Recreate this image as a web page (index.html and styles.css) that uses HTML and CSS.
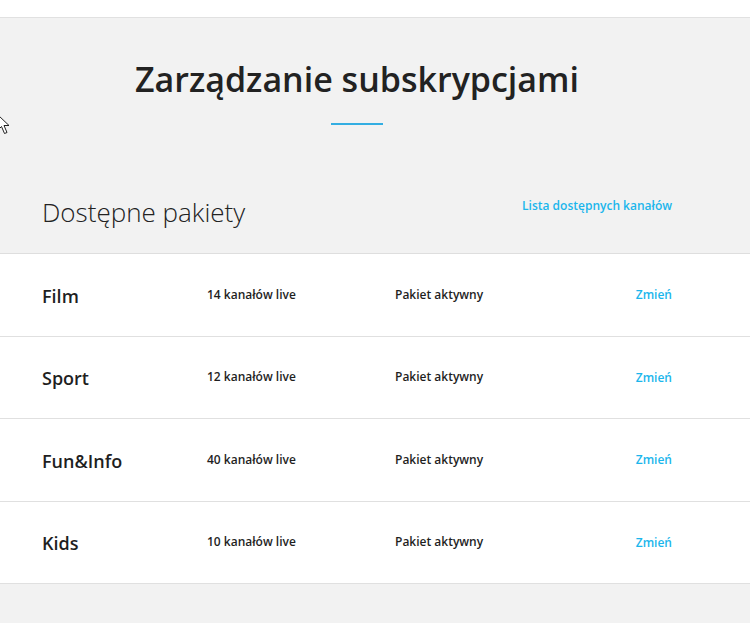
FILE: index.html
```html
<!DOCTYPE html>
<html lang="pl">
<head>
    <meta charset="UTF-8">
    <meta name="viewport" content="width=device-width, initial-scale=1.0">
    <title>Zarządzanie subskrypcjami</title>
    <link rel="stylesheet" href="styles.css">
</head>
<body>
    <div class="topbar"></div>
    <section class="intro">
        <div class="wrap">
            <h1>Zarządzanie subskrypcjami</h1>
            <div class="underline"></div>
            <div class="packages-head">
                <h2>Dostępne pakiety</h2>
                <a href="#" class="link">Lista dostępnych kanałów</a>
            </div>
        </div>
        <svg class="cursor" width="14" height="22" viewBox="0 0 14 22">
            <path d="M1 1 L1 16 L4.5 12.5 L7.5 19.5 L10 18.5 L7 11.5 L12 11.5 Z" fill="#fff" stroke="#222" stroke-width="1"/>
        </svg>
    </section>
    <section class="packages">
        <div class="row">
            <div class="wrap row-inner">
                <div class="name">Film</div>
                <div class="info">14 kanałów live</div>
                <div class="info">Pakiet aktywny</div>
                <a href="#" class="link">Zmień</a>
            </div>
        </div>
        <div class="row">
            <div class="wrap row-inner">
                <div class="name">Sport</div>
                <div class="info">12 kanałów live</div>
                <div class="info">Pakiet aktywny</div>
                <a href="#" class="link">Zmień</a>
            </div>
        </div>
        <div class="row">
            <div class="wrap row-inner">
                <div class="name">Fun&amp;Info</div>
                <div class="info">40 kanałów live</div>
                <div class="info">Pakiet aktywny</div>
                <a href="#" class="link">Zmień</a>
            </div>
        </div>
        <div class="row">
            <div class="wrap row-inner">
                <div class="name">Kids</div>
                <div class="info">10 kanałów live</div>
                <div class="info">Pakiet aktywny</div>
                <a href="#" class="link">Zmień</a>
            </div>
        </div>
    </section>
</body>
</html>
```

FILE: styles.css
```css
body {
    font-family: "Open Sans", "DejaVu Sans", sans-serif;
    margin: 0;
    padding: 0;
    background-color: #f2f2f2;
    color: #1f1f1f;
    height: 623px;
    overflow: hidden;
}
.topbar {
    height: 17px;
    background-color: white;
    border-bottom: 1px solid #e1e1e1;
}
.wrap {
    padding: 0 78px 0 42px;
}
.intro {
    position: relative;
    padding: 38px 0 23px;
}
.intro h1 {
    margin: 0;
    text-align: center;
    font-size: 34px;
    font-weight: 600;
    line-height: 46px;
    color: #222;
}
.underline {
    width: 52px;
    height: 2px;
    margin: 21px auto 0;
    background-color: #33aee2;
}
.packages-head {
    display: flex;
    justify-content: space-between;
    align-items: flex-start;
    margin-top: 70px;
}
.packages-head h2 {
    margin: 0;
    font-size: 26px;
    font-weight: 300;
    line-height: 35px;
    color: #222;
}
.packages-head .link {
    margin-top: 2px;
}
.link {
    color: #1bb6ec;
    font-size: 12px;
    font-weight: 600;
    text-decoration: none;
}
.cursor {
    position: absolute;
    left: -3px;
    top: 96px;
}
.packages {
    background-color: white;
    border-top: 1px solid #dedede;
}
.row {
    border-bottom: 1px solid #e0e0e0;
}
.row-inner {
    display: grid;
    grid-template-columns: 165px 188px 1fr auto;
    align-items: center;
    height: 81.5px;
}
.name {
    font-size: 18px;
    font-weight: 600;
    color: #1f1f1f;
    padding-top: 2px;
}
.info {
    font-size: 12px;
    font-weight: 600;
    color: #1f1f1f;
    padding-bottom: 1px;
}
```
